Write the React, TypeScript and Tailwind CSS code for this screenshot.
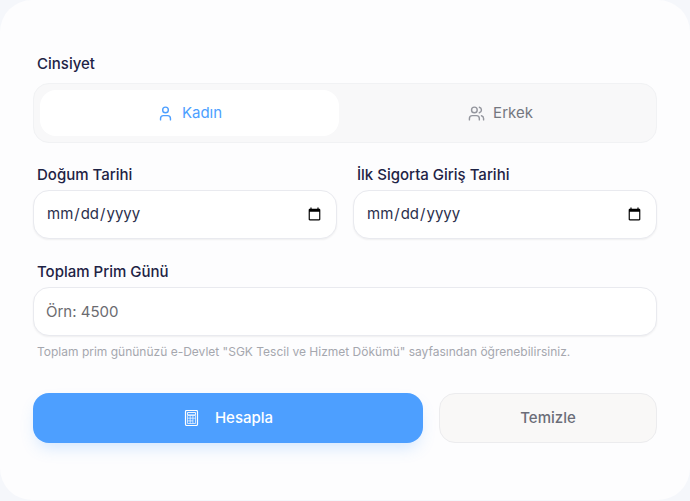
import { useState } from "react";
import { User, Users } from "lucide-react";
import clsx from "clsx";

type Gender = "kadin" | "erkek";

const labelClass = "block px-1 text-[15px] leading-[23px] font-medium text-[#1e2345]";
const fieldClass =
  "mt-1 block h-[49px] w-full rounded-2xl border border-[#e9eaef] bg-white px-3 text-[15px] text-[#2b2f4c] shadow-[0_1px_2px_rgba(0,0,0,0.06)] outline-none";

function CalculatorIcon() {
  return (
    <svg width="16" height="16" viewBox="0 0 16 16" fill="none" stroke="currentColor" aria-hidden="true">
      <rect x="2.5" y="0.5" width="12" height="15" rx="1.2" strokeWidth="1.2" />
      {/* display */}
      <path d="M4.5 2.5h8v2.4h-8z" strokeWidth="0.9" />
      {/* keys */}
      <path
        d="M4.5 5.5h8v8h-8zM7.2 5.5v8M9.9 5.5v8M4.5 8.2h8M4.5 10.9h5.4"
        strokeWidth="0.8"
        strokeOpacity="0.85"
      />
    </svg>
  );
}

export default function App() {
  const [gender, setGender] = useState<Gender>("kadin");
  const [birthDate, setBirthDate] = useState("");
  const [startDate, setStartDate] = useState("");
  const [days, setDays] = useState("");

  const genders: { key: Gender; label: string; icon: React.ElementType }[] = [
    { key: "kadin", label: "Kadın", icon: User },
    { key: "erkek", label: "Erkek", icon: Users },
  ];

  const reset = () => {
    setGender("kadin");
    setBirthDate("");
    setStartDate("");
    setDays("");
  };

  return (
    <div className="min-h-screen bg-[#f5f7fb] pb-px font-['Inter',sans-serif]">
      <form
        className="rounded-[32px] bg-[#fdfdfe] px-[33px] pt-[52px] pb-[57px]"
        onSubmit={(e) => e.preventDefault()}
      >
        {/* Gender */}
        <span id="gender-label" className={labelClass}>
          Cinsiyet
        </span>
        <div
          role="group"
          aria-labelledby="gender-label"
          className="mt-2 grid h-[60px] grid-cols-2 gap-3 rounded-2xl border border-[#f1f2f4] bg-[#f8f8f9] p-1.5"
        >
          {genders.map((g) => (
            <button
              key={g.key}
              type="button"
              aria-pressed={gender === g.key}
              onClick={() => setGender(g.key)}
              className={clsx(
                "flex items-center justify-center gap-2 rounded-2xl text-[15px]",
                gender === g.key ? "bg-white text-[#4d9fff]" : "text-[#747780]"
              )}
            >
              <g.icon
                className={clsx("size-[17px]", gender !== g.key && "text-[#94969e]")}
                strokeWidth={2}
              />
              {g.label}
            </button>
          ))}
        </div>

        {/* Dates */}
        <div className="mt-5 grid grid-cols-2 gap-4">
          <div>
            <label htmlFor="birth" className={labelClass}>
              Doğum Tarihi
            </label>
            <input
              id="birth"
              type="date"
              value={birthDate}
              onChange={(e) => setBirthDate(e.target.value)}
              className={fieldClass}
            />
          </div>
          <div>
            <label htmlFor="start" className={labelClass}>
              İlk Sigorta Giriş Tarihi
            </label>
            <input
              id="start"
              type="date"
              value={startDate}
              onChange={(e) => setStartDate(e.target.value)}
              className={fieldClass}
            />
          </div>
        </div>

        {/* Premium days */}
        <div className="mt-[21px]">
          <label htmlFor="days" className={labelClass}>
            Toplam Prim Günü
          </label>
          <input
            id="days"
            type="text"
            inputMode="numeric"
            placeholder="Örn: 4500"
            value={days}
            onChange={(e) => setDays(e.target.value)}
            className={clsx(fieldClass, "placeholder:text-[#6b6b70]")}
          />
          <p className="mt-2 px-1 text-xs leading-4 text-[#a5a7ae]">
            Toplam prim gününüzü e-Devlet "SGK Tescil ve Hizmet Dökümü" sayfasından öğrenebilirsiniz.
          </p>
        </div>

        <div className="mt-[33px] flex gap-4">
          <button
            type="submit"
            className="flex h-[50px] flex-1 items-center justify-center gap-4 rounded-2xl bg-[#4d9fff] text-[15px] font-medium text-white shadow-[0_8px_16px_-4px_rgba(77,159,255,0.25)]"
          >
            <CalculatorIcon />
            Hesapla
          </button>
          <button
            type="button"
            onClick={reset}
            className="h-[50px] w-[218px] rounded-2xl border border-[#ececee] bg-[#f9f8f7] text-[15px] font-medium text-[#6b6d78]"
          >
            Temizle
          </button>
        </div>
      </form>
    </div>
  );
}
